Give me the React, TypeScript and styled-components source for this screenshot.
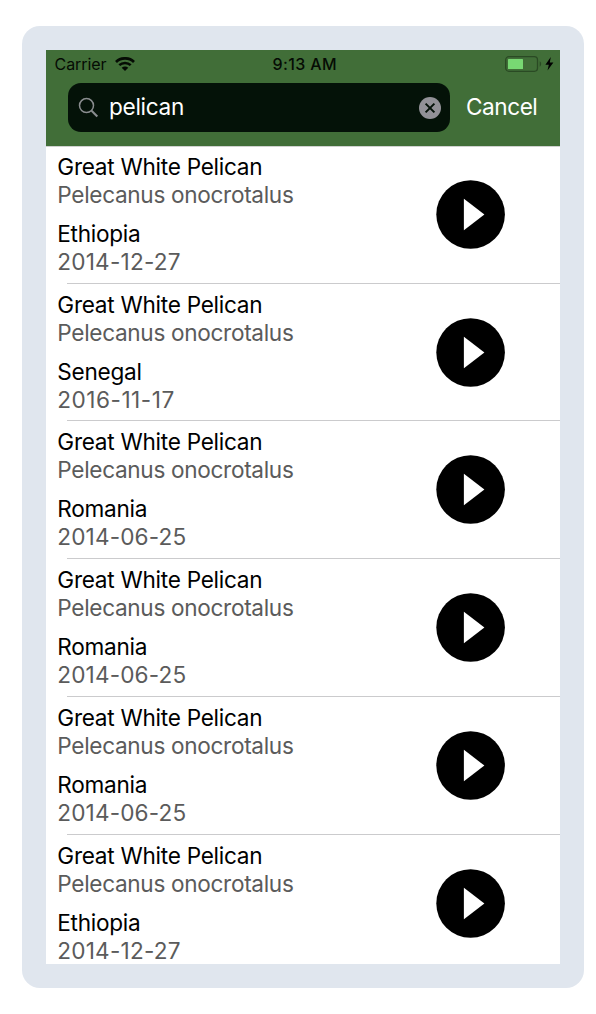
import React from "react";
import styled, { createGlobalStyle } from "styled-components";

const GlobalStyle = createGlobalStyle`
  * { box-sizing: border-box; }
  body {
    margin: 0;
    background: #fff;
    font-family: Inter, "Liberation Sans", sans-serif;
  }
`;

const Page = styled.div`
  width: 596px;
  height: 1014px;
  padding: 26px 12px 26px 22px;
  overflow: hidden;
`;

const Frame = styled.main`
  width: 562px;
  height: 962px;
  padding: 24px;
  border-radius: 18px;
  background: #e0e6ee;
`;

const Screen = styled.div`
  height: 914px;
  overflow: hidden;
  background: #fff;
`;

const Header = styled.header`
  height: 95.9px;
  background: #416e38;
  box-shadow: 0 1px 0 #d0d2d0;
`;

const StatusBar = styled.div`
  display: grid;
  grid-template-columns: 1fr auto 1fr;
  align-items: center;
  height: 28px;
  padding: 0 6px 0 8.5px;
  font-size: 16px;
  line-height: 20px;
  color: #050b04;
`;

const Carrier = styled.div`
  display: flex;
  align-items: center;
  gap: 8px;
  letter-spacing: -0.05px;
`;

const Clock = styled.div`
  margin-left: 1px;
  font-weight: 500;
  letter-spacing: 0.35px;
`;

const Power = styled.div`
  display: flex;
  justify-content: flex-end;
  align-items: center;
`;

const SearchRow = styled.div`
  display: flex;
  align-items: center;
  height: 49px;
  margin-top: 5px;
  padding: 0 22px;
`;

const SearchField = styled.div`
  display: flex;
  align-items: center;
  width: 382px;
  height: 49px;
  padding: 0 9px 0 10px;
  border-radius: 13px;
  background: #041208;
`;

const Query = styled.span`
  flex: 1;
  margin: -2px 0 0 10px;
  font-size: 22.6px;
  line-height: 28px;
  letter-spacing: -0.3px;
  color: #fff;
`;

const Cancel = styled.span`
  margin: -2px 0 0 16px;
  font-size: 22.6px;
  line-height: 28px;
  letter-spacing: -0.45px;
  color: #fff;
`;

const Row = styled.article`
  display: flex;
  justify-content: space-between;
  align-items: flex-start;
  height: 137.75px;
  padding: 7px 55px 0 11.3px;
  background: linear-gradient(#cbcbcd, #cbcbcd) 20.5px 100% / 100% 1px no-repeat;
`;

const Info = styled.div`
  display: flex;
  flex-direction: column;
`;

const Line = styled.span<{ $muted?: boolean; $gap?: boolean; $spacing?: number }>`
  margin-top: ${(p) => (p.$gap ? 11 : 0)}px;
  font-size: 22.6px;
  line-height: 28px;
  white-space: nowrap;
  letter-spacing: ${(p) => p.$spacing ?? 0}px;
  color: ${(p) => (p.$muted ? "#5b5b5b" : "#000")};
`;

const PlayButton = styled.svg`
  display: block;
  width: 69px;
  height: 69px;
  margin-top: 27px;
`;

const recordings = [
  { country: "Ethiopia", date: "2014-12-27", dateSpacing: 0.2 },
  { country: "Senegal", date: "2016-11-17", dateSpacing: 0.5 },
  { country: "Romania", date: "2014-06-25", dateSpacing: 0.14 },
  { country: "Romania", date: "2014-06-25", dateSpacing: 0.14 },
  { country: "Romania", date: "2014-06-25", dateSpacing: 0.14 },
  { country: "Ethiopia", date: "2014-12-27", dateSpacing: 0.2 },
];

const WifiIcon = () => (
  <svg width="20" height="14" viewBox="0 0 20 14" fill="none" stroke="#050b04">
    <path d="M1 4.9C6 .2 14 .2 19 4.9" strokeWidth="2.8" />
    <path d="M4.3 8.2C7.4 5.2 12.6 5.2 15.7 8.2" strokeWidth="2.5" />
    <path d="M10 14 6.7 10.8C8.6 9.1 11.4 9.1 13.3 10.8Z" fill="#050b04" stroke="none" />
  </svg>
);

const BatteryIcon = () => (
  <svg width="49" height="16" viewBox="0 0 49 16">
    <rect x=".7" y=".7" width="31.8" height="14.6" rx="3.2" fill="none" stroke="#2a4a24" strokeWidth="1.3" />
    <rect x="3" y="3" width="15" height="10" rx=".6" fill="#78d873" />
    <path d="M34.7 5.3C36.6 6 36.6 10 34.7 10.7Z" fill="#2a4a24" />
    <path d="M45.8 1.1 40.4 8.8H43.8L42.5 14.4 48.4 6.6H44.8Z" fill="#000" />
  </svg>
);

const SearchIcon = () => (
  <svg width="21" height="22" viewBox="0 0 21 22" fill="none" stroke="#8a8d8f">
    <circle cx="8.5" cy="8.6" r="7" strokeWidth="1.5" />
    <path d="M13.6 13.8 19.3 19.4" strokeWidth="2.1" />
  </svg>
);

const ClearIcon = () => (
  <svg width="22" height="22" viewBox="0 0 22 22">
    <circle cx="11" cy="11" r="11" fill="#929197" />
    <path d="M6.6 6.6 15.4 15.4M15.4 6.6 6.6 15.4" stroke="#041208" strokeWidth="2" />
  </svg>
);

const List = styled.section`
  margin-right: 0;
`;

const HeaderLayer = styled.div`
  position: relative;
  z-index: 1;
`;

export default function App() {
  return (
    <>
      <GlobalStyle />
      <Page>
        <Frame>
          <Screen>
            <HeaderLayer>
              <Header>
                <StatusBar>
                  <Carrier>
                    Carrier <WifiIcon />
                  </Carrier>
                  <Clock>9:13 AM</Clock>
                  <Power>
                    <BatteryIcon />
                  </Power>
                </StatusBar>
                <SearchRow>
                  <SearchField>
                    <SearchIcon />
                    <Query>pelican</Query>
                    <ClearIcon />
                  </SearchField>
                  <Cancel>Cancel</Cancel>
                </SearchRow>
              </Header>
            </HeaderLayer>
            <List>
              {recordings.map((r, i) => (
                <Row key={i}>
                  <Info>
                    <Line $spacing={-0.27}>Great White Pelican</Line>
                    <Line $muted $spacing={-0.32}>Pelecanus onocrotalus</Line>
                    <Line $gap $spacing={-0.27}>{r.country}</Line>
                    <Line $muted $spacing={r.dateSpacing}>{r.date}</Line>
                  </Info>
                  <PlayButton viewBox="0 0 69 69" role="img" aria-label="Play">
                    <circle cx="34.6" cy="34.5" r="34.3" fill="#000" />
                    <path d="M27.9 18.8V50.3L48.4 34.6Z" fill="#fff" />
                  </PlayButton>
                </Row>
              ))}
            </List>
          </Screen>
        </Frame>
      </Page>
    </>
  );
}
